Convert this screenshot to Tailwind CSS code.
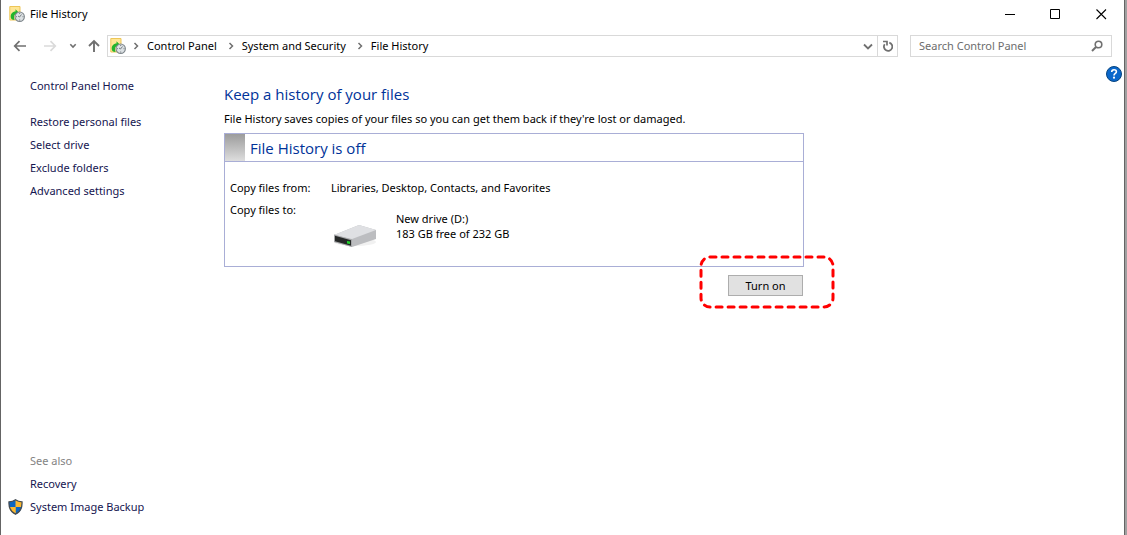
<!DOCTYPE html>
<html lang="en">
<head>
<meta charset="utf-8">
<meta name="viewport" content="width=device-width, initial-scale=1">
<title>File History</title>
<script src="https://cdn.jsdelivr.net/npm/@tailwindcss/browser@4"></script>
</head>
<body class="bg-[#a0a0a0] pr-0.5 font-['Noto_Sans',sans-serif] text-[11px] leading-4 text-black">
<svg class="hidden">
  <symbol id="history" viewBox="0 0 16 16">
    <path d="M.8.5h10.200v13.500H.8z" fill="#ffe694" stroke="#edc658"/>
    <path d="M1.800 11.500C1.300 8 3.500 5.500 6.500 5.500V3.200L10 6.800 6.800 10V8.500C5 8.500 4.500 10.500 5.500 14c-2.500 0-3.400-1-3.700-2.500z" fill="#22b52c"/>
    <circle cx="10.700" cy="10.700" r="4.700" fill="#dce1e4" stroke="#7f878c" stroke-width="1.100"/>
    <path d="M10.700 7v1M10.700 13.500v1M7 10.700h1M13.500 10.700h1M12.500 8.500l-2 2.500-1.500-1" fill="none" stroke="#6b7378" stroke-width=".9"/>
  </symbol>
  <symbol id="chev" viewBox="0 0 6 8"><path d="M1.500 1l3 3-3 3" fill="none" stroke="#707070" stroke-width="1.500"/></symbol>
</svg>
<div class="flex min-h-screen flex-col border-x border-[#646464] bg-white">
  <header class="flex h-7 items-center pl-2">
    <svg class="size-4"><use href="#history"/></svg>
    <h1 class="ml-[5px] flex-1">File History</h1>
    <button aria-label="Minimize" class="flex h-7 w-[45px] items-center justify-center"><svg class="size-[11px]" viewBox="0 0 11 11"><path d="M0 5.500h10" stroke="#000"/></svg></button>
    <button aria-label="Maximize" class="flex h-7 w-[45px] items-center justify-center"><svg class="size-[11px]" viewBox="0 0 11 11"><path d="M.5.5h9v9h-9z" fill="none" stroke="#000"/></svg></button>
    <button aria-label="Close" class="flex h-7 w-[46px] items-center justify-center"><svg class="size-[11px]" viewBox="0 0 11 11"><path d="M.5.5l9.500 9.500M10 .5L.5 10" stroke="#000" stroke-width="1.100"/></svg></button>
  </header>
  <nav class="mt-[7px] flex h-[22px] items-center pr-3 pl-3" aria-label="Location">
    <button aria-label="Back" class="mr-4"><svg class="h-3 w-[14px]" viewBox="0 0 14 12"><path d="M13 6H2M6.500 1.200L1.700 6l4.800 4.800" fill="none" stroke="#707070" stroke-width="1.700"/></svg></button>
    <button aria-label="Forward" class="mr-3"><svg class="h-3 w-[14px]" viewBox="0 0 14 12"><path d="M1 6h11M7.500 1.200L12.300 6l-4.800 4.800" fill="none" stroke="#dadada" stroke-width="1.700"/></svg></button>
    <button aria-label="Recent locations" class="mr-[11px]"><svg class="h-[6px] w-2" viewBox="0 0 8 6"><path d="M1.300 1.300L4 4l2.700-2.700" fill="none" stroke="#707070" stroke-width="1.600"/></svg></button>
    <button aria-label="Up" class="mr-[7px]"><svg class="h-[14px] w-3" viewBox="0 0 12 14"><path d="M6 13V2M1 7l5-5 5 5" fill="none" stroke="#707070" stroke-width="1.900"/></svg></button>
    <div class="mr-3 flex h-[22px] flex-1 items-center border border-[#d9d9d9] pl-0.5">
      <svg class="size-4"><use href="#history"/></svg>
      <svg class="ml-[7px] h-2 w-[6px]"><use href="#chev"/></svg>
      <a href="#" class="ml-2">Control Panel</a>
      <svg class="ml-[11px] h-2 w-[6px]"><use href="#chev"/></svg>
      <a href="#" class="ml-2">System and Security</a>
      <svg class="ml-[11px] h-2 w-[6px]"><use href="#chev"/></svg>
      <a href="#" class="ml-2 flex-1">File History</a>
      <button aria-label="Previous locations" class="flex h-5 w-5 items-center justify-center border-r border-[#d9d9d9]"><svg class="h-[7px] w-[10px]" viewBox="0 0 10 7"><path d="M1 1.500l4 4 4-4" fill="none" stroke="#707070" stroke-width="1.800"/></svg></button>
      <button aria-label="Refresh" class="flex h-5 w-[19px] items-center justify-center"><svg class="h-3 w-[10px]" viewBox="0 0 10 12"><path d="M6.300 2.600A4.200 4.200 0 1 1 1.700 4.200" fill="none" stroke="#707070" stroke-width="1.800"/><path d="M0 1.500h4V5.500" fill="none" stroke="#707070" stroke-width="1.700"/></svg></button>
    </div>
    <div class="flex h-[22px] w-[202px] items-center border border-[#d9d9d9] pr-2 pl-2">
      <input type="text" aria-label="Search Control Panel" placeholder="Search Control Panel" class="h-4 w-0 flex-1 outline-none placeholder:text-[#6d6d6d]">
      <svg class="size-3" viewBox="0 0 12 12"><circle cx="7.500" cy="4.500" r="3.300" fill="none" stroke="#707070" stroke-width="1.600"/><path d="M5 7L1 11" stroke="#707070" stroke-width="2"/></svg>
    </div>
  </nav>
  <div class="flex flex-1 items-stretch">
    <aside class="flex w-[223px] flex-col pt-[21px] pb-5 pl-[29px] text-[#151550]">
      <a href="#">Control Panel Home</a>
      <div class="mt-5 flex flex-col gap-[7px]">
        <a href="#">Restore personal files</a>
        <a href="#">Select drive</a>
        <a href="#">Exclude folders</a>
        <a href="#">Advanced settings</a>
      </div>
      <div class="mt-auto flex flex-col gap-[7px]">
        <h2 class="text-[#838383]">See also</h2>
        <a href="#">Recovery</a>
        <a href="#" class="-ml-[22px] flex items-center gap-[7px]">
          <svg class="h-4 w-[15px]" viewBox="0 0 15 16"><path d="M7.500.8C5.500 2.300 3.500 2.800 1 2.800c-.4 6 1.500 10 6.500 12.400 5-2.400 6.900-6.400 6.500-12.400-2.500 0-4.500-.5-6.500-2z" fill="#fdb92f"/><path d="M7.500.8C5.500 2.300 3.500 2.800 1 2.800V8h6.500z" fill="#0b66c3"/><path d="M7.500 8h6.300c-.6 3.500-2.800 5.900-6.300 7.200z" fill="#0b66c3"/><path d="M1.200 8h6.300v7.200C4 13.900 1.800 11.500 1.200 8z" fill="#fdb92f"/><path d="M7.500.8C5.500 2.300 3.500 2.800 1 2.800c-.4 6 1.500 10 6.500 12.400 5-2.400 6.900-6.400 6.500-12.400-2.500 0-4.500-.5-6.500-2z" fill="none" stroke="#444d55" stroke-width="1.300"/></svg>
          System Image Backup</a>
      </div>
    </aside>
    <main class="min-w-0 flex-1 pt-[27px]">
      <h2 class="font-['Open_Sans',sans-serif] text-[15px] leading-5 text-[#003399]">Keep a history of your files</h2>
      <p class="mt-[7px]">File History saves copies of your files so you can get them back if they're lost or damaged.</p>
      <div class="mt-1.5 max-w-[580px]">
        <section class="border border-[#a9aed6] pb-[18px]">
          <div class="flex h-7 items-center border-b border-[#a9aed6]">
            <span class="h-full w-5 bg-linear-to-b from-[#9c9c9c] to-[#dedede]"></span>
            <h3 class="ml-[5px] font-['Open_Sans',sans-serif] text-[15px] leading-5 text-[#003399]">File History is off</h3>
          </div>
          <dl class="grid grid-cols-[101px_1fr] gap-y-1.5 pt-[18px] pl-[5px]">
            <dt>Copy files from:</dt>
            <dd>Libraries, Desktop, Contacts, and Favorites</dd>
            <dt>Copy files to:</dt>
            <dd class="flex items-start pl-0.5">
              <svg class="mt-5 h-[26px] w-[46px]" viewBox="0 0 46 26">
                <ellipse cx="22" cy="20" rx="21" ry="4" fill="#f1f1f1"/>
                <path d="M1 13L26 3l17 5v9l-24 8-18-5z" fill="#bcbdc0"/>
                <path d="M1 13L26 3l17 5-24 9z" fill="#dfe0e3"/>
                <path d="M1 12.500l18 5V25L1 20z" fill="#a5a6a8"/>
                <path d="M2 13.800l16 4.400v5.600L2 19.300z" fill="#252827"/>
                <path d="M14 19l3 .6v2.400l-3-.5z" fill="#20d52c"/>
              </svg>
              <div class="mt-[9px] ml-[17px] leading-[15px]">New drive (D:)<br>183 GB free of 232 GB</div>
            </dd>
          </dl>
        </section>
        <div class="relative mt-2 flex justify-end pr-px">
          <button class="h-[21px] w-[75px] border border-[#adadad] bg-[#e1e1e1]">Turn on</button>
          <svg class="pointer-events-none absolute -top-5 -right-[31px] h-[54px] w-[136px]" viewBox="0 0 136 54" aria-hidden="true"><rect x="2" y="2" width="132" height="50" rx="9" fill="none" stroke="#f00" stroke-width="3" stroke-dasharray="6 6" stroke-linecap="round"/></svg>
        </div>
      </div>
    </main>
    <div class="pt-[9px] pr-0.5">
      <button aria-label="Help" class="block"><svg class="size-4" viewBox="0 0 16 16"><circle cx="8" cy="8" r="7.500" fill="#0a67cb" stroke="#07457f"/><path d="M5.700 6c0-3 4.700-3 4.700-.2C10.400 7.400 8 7.400 8 9.400" fill="none" stroke="#fff" stroke-width="1.600"/><circle cx="8" cy="11.700" r="1.100" fill="#fff"/></svg></button>
    </div>
  </div>
</div>
</body>
</html>
